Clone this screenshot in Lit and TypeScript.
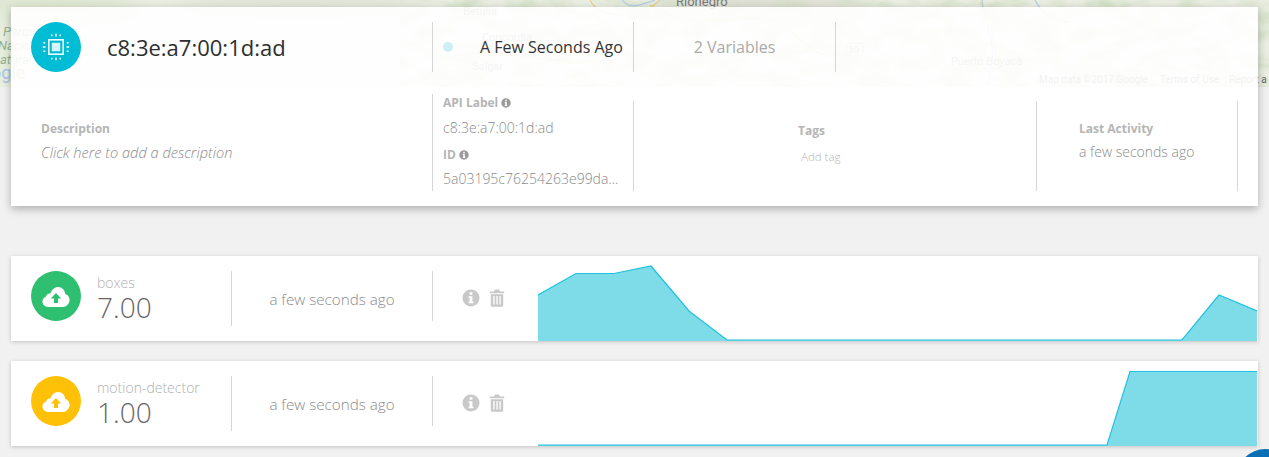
import { LitElement, html, css, svg } from "lit";
import { customElement } from "lit/decorators.js";

const infoIcon = (cls: string) => html`<svg class=${cls} viewBox="0 0 18 18"><path fill-rule="evenodd" d="M9 .5a8.5 8.5 0 1 1 0 17 8.5 8.5 0 0 1 0-17ZM7.6 3.2v2.6h2.8V3.2ZM6.6 7.3v1.6h1v3.6h-1v1.7h4.8v-1.7h-1V7.3Z"/></svg>`;

const trashIcon = html`<svg class="trash" viewBox="0 0 16 18"><path fill-rule="evenodd" d="M5 2.4 6 .5h4l1 1.900h4.200v1.900H.8V2.4ZM1.800 5.200h12.400v11c0 .9-.6 1.500-1.400 1.500H3.200c-.8 0-1.400-.6-1.400-1.500ZM4.300 7v8.600h1.300V7Zm3.100 0v8.600h1.300V7Zm3 0v8.600h1.300V7Z"/></svg>`;

const cloudIcon = html`<svg class="cloud" viewBox="0 0 28 22"><path fill="#fff" d="M6.200 21C2.900 21 .4 18.600.4 15.600c0-2.400 1.500-4.400 3.700-5.100C4.600 8.300 6.500 7 8.400 7.500 9.700 3.600 13 1 16 1c3.900 0 7 3 7.200 6.900 2.700.7 4.400 3.100 4.400 5.900 0 4-3.200 7.200-6.800 7.200Z"/><path class="arrow" d="M14 7 19.200 12.400H16V17H12V12.400H8.800Z"/></svg>`;

const chipIcon = html`<svg class="chip" viewBox="0 0 30 30" fill="none" stroke="#fff"><rect x="7.300" y="7.300" width="15.400" height="15.400" stroke-width="1.600"/><rect x="10.500" y="10.500" width="9" height="9" fill="#fff" fill-opacity="0.85" stroke="none"/><path stroke-width="1.500" d="M10.500 1.500v2M15 .8v3M19.500 1.500v2M10.500 26.500v2M15 26.200v3M19.500 26.500v2M1.500 10.500h2M.8 15h3M1.500 19.500h2M26.500 10.500h2M26.200 15h3M26.500 19.500h2"/></svg>`;

const chart = (points: number[][]) => {
  const line = points.map((p) => p.join(",")).join(" ");
  const first = points[0];
  const last = points[points.length - 1];
  return html`<svg class="chart" viewBox="0 0 719 85" preserveAspectRatio="none">
    <polygon class="area" points="${first[0]},85 ${line} ${last[0]},85"></polygon>
    <polyline class="line" points=${line}></polyline>
  </svg>`;
};

const mapLayer = svg`
  <defs>
    <filter id="soft"><feGaussianBlur stdDeviation="9"/></filter>
    <filter id="mottle" x="0" y="0" width="100%" height="100%">
      <feTurbulence type="fractalNoise" baseFrequency="0.035 0.07" numOctaves="3" seed="7"/>
      <feColorMatrix values="0 0 0 0 0.66  0 0 0 0 0.75  0 0 0 0 0.58  2.4 0 0 0 -1"/>
    </filter>
  </defs>
  <rect width="1269" height="87" fill="#eaeee2"/>
  <g filter="url(#soft)">
    <ellipse cx="50" cy="5" rx="90" ry="12" fill="#dbe5cf"/>
    <ellipse cx="300" cy="2" rx="130" ry="9" fill="#dfe1d6"/>
    <ellipse cx="760" cy="3" rx="110" ry="8" fill="#dad7cd"/>
    <ellipse cx="4" cy="55" rx="10" ry="30" fill="#e6efd9"/>
  </g>
  <rect x="400" width="869" height="87" filter="url(#mottle)"/>
  <g fill="none" stroke-width="1.200">
    <path stroke="#e6cf8c" d="M590 0 C600 20 640 20 660 0M650 5 C700 40 760 0 790 30S830 60 860 50M440 60 C500 40 550 70 600 60M980 2 C1000 30 990 60 1010 85"/>
    <path stroke="#b3cde6" d="M982 0 C985 25 995 40 992 60S985 80 990 87M1035 0 C1040 10 1050 20 1070 22M622 0 C630 10 640 5 655 0"/>
  </g>
  <g class="maptext">
    <text x="463" y="15">Betulia</text>
    <text x="482" y="41">Concordia</text>
    <text x="472" y="70">Salgar</text>
    <text x="951" y="65">Puerto Boyacá</text>
  </g>
  <text x="676" y="6" font-family="Roboto, sans-serif" font-size="13" fill="#777">Rionegro</text>
  <g font-family="Roboto, sans-serif" font-size="13" font-style="italic" fill="#94b394">
    <text x="3" y="36">Parque</text>
    <text x="-2" y="50">Nacional</text>
    <text x="-9" y="64">Natural</text>
  </g>
  <text x="-9" y="79" font-family="Roboto, sans-serif" font-size="18" fill="#a8c4ee">o<tspan>g</tspan><tspan fill="#7fbf7f">l</tspan><tspan fill="#e88">e</tspan></text>
  <g class="mapsmall">
    <text x="1039" y="83">Map data ©2017 Google</text>
    <text x="1160" y="83">Terms of Use</text>
    <text x="1229" y="83">Report a map error</text>
  </g>
  <g fill="none" stroke="#bbb" stroke-width="1">
    <rect x="547" y="49" width="19" height="11" rx="4"/>
    <rect x="846" y="43" width="17" height="13" rx="4"/>
  </g>
  <text x="849" y="53" font-family="Roboto, sans-serif" font-size="9" fill="#999">60</text>
`;

@customElement("app-root")
export class AppRoot extends LitElement {
  static styles = css`
    :host {
      display: block;
      position: relative;
      height: 457px;
      overflow: hidden;
      background: #f1f1f1;
      font-family: "Open Sans", sans-serif;
    }
    .map {
      position: absolute;
      left: 0;
      top: 0;
      width: 1269px;
      height: 87px;
    }
    .maptext text {
      font: 11px Roboto, sans-serif;
      fill: #8a8a8a;
    }
    .mapsmall text {
      font: 10px Roboto, sans-serif;
      fill: #666;
    }
    .page {
      position: relative;
      display: flex;
      flex-direction: column;
      padding: 7px 11px 0;
    }
    .device {
      height: 199px;
      border-radius: 2px;
      box-shadow: 0 3px 8px rgba(0, 0, 0, 0.28);
      margin-bottom: 50px;
    }
    .head {
      display: flex;
      align-items: center;
      height: 80px;
      background: rgba(255, 255, 255, 0.91);
    }
    .head-main {
      display: flex;
      align-items: center;
      width: 421px;
      padding-left: 20px;
      box-sizing: border-box;
    }
    .badge {
      flex: none;
      width: 50px;
      height: 50px;
      border-radius: 50%;
      display: flex;
      align-items: center;
      justify-content: center;
    }
    .teal {
      background: #00bcd4;
    }
    .green {
      background: #2fbf71;
    }
    .amber {
      background: #ffc107;
    }
    .chip {
      width: 28px;
      height: 28px;
    }
    .cloud {
      width: 28px;
      height: 22px;
      margin-top: 2px;
    }
    .green .arrow {
      fill: #2fbf71;
    }
    .amber .arrow {
      fill: #ffc107;
    }
    .name {
      margin-left: 26px;
      font-size: 22px;
      color: #2e2e2e;
      line-height: 28px;
      margin-bottom: 1px;
    }
    .head-cell {
      height: 50px;
      border-left: 1px solid #d5d5d5;
      display: flex;
      align-items: center;
      box-sizing: border-box;
    }
    .status {
      width: 201px;
      padding-left: 10px;
    }
    .dot {
      flex: none;
      width: 10px;
      height: 10px;
      border-radius: 50%;
      background: #cdeff5;
    }
    .status-text {
      margin-left: 27px;
      font-size: 16px;
      color: #333;
      white-space: nowrap;
    }
    .vars {
      width: 202px;
      justify-content: center;
      font-size: 16px;
      color: #aaa;
    }
    .head-end {
      flex: 1;
    }
    .details {
      height: 119px;
      background: #fff;
      display: flex;
      padding-top: 14px;
      box-sizing: border-box;
    }
    .col {
      height: 90px;
      box-sizing: border-box;
      display: flex;
      flex-direction: column;
      justify-content: center;
    }
    .rule {
      border-left: 1px solid #d5d5d5;
    }
    .label {
      font-size: 12px;
      font-weight: 700;
      color: #b5b5b5;
      line-height: 17px;
    }
    .val {
      font-size: 14px;
      font-weight: 300;
      color: #8b8b8b;
      line-height: 20px;
    }
    .desc {
      width: 421px;
      padding: 0 0 11px 30px;
      gap: 5px;
    }
    .desc .val {
      font-style: italic;
      font-size: 14.6px;
    }
    .api {
      width: 201px;
      padding-left: 10px;
      justify-content: flex-start;
      margin-top: -7px;
      height: 97px;
    }
    .api .val {
      margin: 7px 0 8px;
      white-space: nowrap;
      overflow: hidden;
      text-overflow: ellipsis;
    }
    .api .val:last-child {
      margin: 6px 0 0;
    }
    .label-info {
      display: flex;
      align-items: center;
      gap: 3px;
    }
    .mini-info {
      width: 10px;
      height: 10px;
      fill: #999;
    }
    .tags {
      width: 403px;
      align-items: flex-start;
      gap: 9px;
      padding: 0 0 6px 164px;
    }
    .addtag {
      font-size: 11.5px;
      font-weight: 300;
      color: #b5b5b5;
      line-height: 17px;
      margin-left: 3px;
    }
    .last {
      width: 202px;
      padding: 0 0 11px 42px;
      gap: 5px;
      border-right: 1px solid #d5d5d5;
      flex: none;
    }
    .row {
      display: flex;
      height: 85px;
      background: #fff;
      box-shadow: 0 1px 4px rgba(0, 0, 0, 0.2);
      margin-bottom: 20px;
    }
    .row-main {
      width: 220px;
      flex: none;
      display: flex;
      padding: 15px 0 0 20px;
      box-sizing: border-box;
    }
    .row-text {
      margin-left: 16px;
      display: flex;
      flex-direction: column;
    }
    .var-name {
      font-size: 14px;
      font-weight: 300;
      color: #b0b0b0;
      line-height: 20px;
      margin-top: 2px;
    }
    .var-value {
      font-size: 28px;
      font-weight: 300;
      color: #666;
      line-height: 28px;
    }
    .row-time {
      flex: none;
      width: 201px;
      height: 55px;
      margin-top: 15px;
      box-sizing: border-box;
      border-left: 1px solid #d5d5d5;
      display: flex;
      align-items: center;
      justify-content: center;
      font-size: 15.2px;
      font-weight: 300;
      color: #8b8b8b;
    }
    .row-actions {
      flex: none;
      width: 106px;
      height: 50px;
      margin-top: 15px;
      box-sizing: border-box;
      border-left: 1px solid #d5d5d5;
      display: flex;
      align-items: flex-start;
      padding: 18px 0 0 29px;
      gap: 9px;
    }
    .info {
      width: 18px;
      height: 18px;
      fill: #c9c9c9;
    }
    .trash {
      width: 16px;
      height: 18px;
      fill: #c9c9c9;
    }
    .chart {
      display: block;
      flex: none;
      width: 719px;
      height: 85px;
    }
    .area {
      fill: #7edce9;
    }
    .line {
      fill: none;
      stroke: #1fc1dc;
      stroke-width: 1.2;
    }
    .fab {
      position: absolute;
      left: 1237px;
      top: 449px;
      width: 56px;
      height: 56px;
      border-radius: 50%;
      background: #0a6fb5;
    }
  `;

  private row(name: string, value: string, color: string, points: number[][]) {
    return html`<section class="row">
      <div class="row-main">
        <div class="badge ${color}">${cloudIcon}</div>
        <div class="row-text">
          <div class="var-name">${name}</div>
          <div class="var-value">${value}</div>
        </div>
      </div>
      <div class="row-time">a few seconds ago</div>
      <div class="row-actions">${infoIcon("info")}${trashIcon}</div>
      ${chart(points)}
    </section>`;
  }

  render() {
    return html`
      <svg class="map" viewBox="0 0 1269 87">${mapLayer}</svg>
      <main class="page">
        <section class="device">
          <header class="head">
            <div class="head-main">
              <div class="badge teal">${chipIcon}</div>
              <div class="name">c8:3e:a7:00:1d:ad</div>
            </div>
            <div class="head-cell status">
              <span class="dot"></span>
              <span class="status-text">A Few Seconds Ago</span>
            </div>
            <div class="head-cell vars">2 Variables</div>
            <div class="head-cell head-end"></div>
          </header>
          <div class="details">
            <div class="col desc">
              <div class="label">Description</div>
              <div class="val">Click here to add a description</div>
            </div>
            <div class="col api rule">
              <div class="label label-info">API Label ${infoIcon("mini-info")}</div>
              <div class="val">c8:3e:a7:00:1d:ad</div>
              <div class="label label-info">ID ${infoIcon("mini-info")}</div>
              <div class="val">5a03195c76254263e99da...</div>
            </div>
            <div class="col tags rule">
              <div class="label">Tags</div>
              <div class="addtag">Add tag</div>
            </div>
            <div class="col last rule">
              <div class="label">Last Activity</div>
              <div class="val">a few seconds ago</div>
            </div>
          </div>
        </section>
        ${this.row("boxes", "7.00", "green", [[0, 39], [38, 17.5], [76, 17.5], [113, 10], [151, 55], [189, 84], [644, 84], [681, 39], [719, 55]])}
        ${this.row("motion-detector", "1.00", "amber", [[0, 84], [569, 84], [592, 10.5], [719, 10.5]])}
      </main>
      <div class="fab"></div>
    `;
  }
}
